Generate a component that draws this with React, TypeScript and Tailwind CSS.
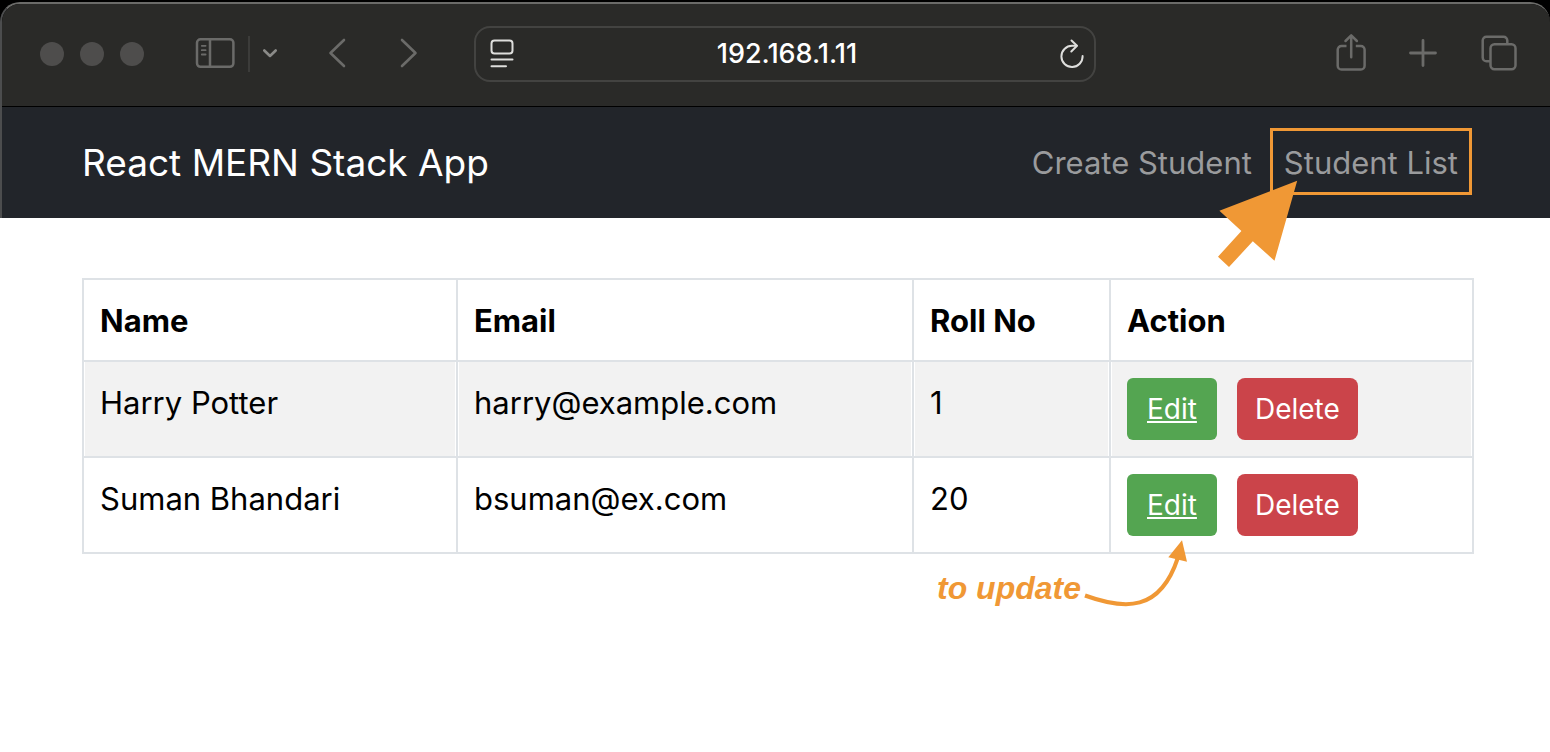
import React from "react";

type Student = { name: string; email: string; rollNo: number };

const students: Student[] = [
  { name: "Harry Potter", email: "harry@example.com", rollNo: 1 },
  { name: "Suman Bhandari", email: "bsuman@ex.com", rollNo: 20 },
];

const line = {
  fill: "none",
  stroke: "currentColor",
  strokeLinecap: "round" as const,
  strokeLinejoin: "round" as const,
};

function SidebarIcon() {
  return (
    <svg width="40" height="32" viewBox="0 0 40 32" {...line} strokeWidth="2.5">
      <rect x="2" y="2.3" width="36.400" height="27.500" rx="3.500" />
      <path d="M15 2.300v27.500" />
      <path d="M6.800 8.800h3.800M6.800 13.200h3.800M6.800 17.500h3.800" strokeWidth="1.800" />
    </svg>
  );
}

function ShareIcon() {
  return (
    <svg width="32" height="40" viewBox="0 0 32 40" {...line} strokeWidth="2.5">
      <path
        strokeLinecap="butt"
        d="M11.500 13H6.500a3.800 3.800 0 0 0-3.800 3.800v16A3.800 3.800 0 0 0 6.500 36.600h19.300a3.800 3.800 0 0 0 3.800-3.800V16.800a3.800 3.800 0 0 0-3.800-3.800h-5"
      />
      <path d="M16.200 24.200V2.500M10.500 8L16.200 2.300 21.900 8" />
    </svg>
  );
}

function TabsIcon() {
  return (
    <svg width="36" height="36" viewBox="0 0 36 36" {...line} strokeWidth="2.5">
      <path
        strokeLinecap="butt"
        d="M26.300 8.500V5.500A3.800 3.800 0 0 0 22.500 1.700H5.500a3.800 3.800 0 0 0-3.800 3.800v17A3.800 3.800 0 0 0 5.500 26.300H9"
      />
      <rect x="9.500" y="9.300" width="25" height="25" rx="4" />
    </svg>
  );
}

function ReaderIcon() {
  return (
    <svg width="24" height="30" viewBox="0 0 24 30" {...line} strokeWidth="2">
      <rect x="1.500" y="1.500" width="21" height="13" rx="3" />
      <path d="M1.500 20.500h21M1.500 27.300h14.500" />
    </svg>
  );
}

function ReloadIcon() {
  return (
    <svg width="24" height="30" viewBox="0 0 24 30" {...line} strokeWidth="2">
      <path d="M16.500 6.800H12a10.600 10.600 0 1 0 10.600 10.300" />
      <path d="M11.500 1.500L17 6.800l-5.700 5.700" />
    </svg>
  );
}

function BrowserToolbar() {
  return (
    <header className="flex h-[105px] items-center border-b border-black bg-[#2a2a28] text-[#6b6b69]">
      <div className="flex w-[472px] shrink-0 items-center pl-[38px]">
        <div className="flex gap-4">
          <span className="size-6 rounded-full bg-[#4e4d4c]" />
          <span className="size-6 rounded-full bg-[#4e4d4c]" />
          <span className="size-6 rounded-full bg-[#4e4d4c]" />
        </div>
        <button type="button" aria-label="Show sidebar" className="ml-[51px] pb-0.5">
          <SidebarIcon />
        </button>
        <span className="ml-[13px] h-9 w-0.5 bg-[#3c3c3a]" />
        <button type="button" aria-label="Tab groups" className="ml-3 pb-0.5 text-[#8a8a88]">
          <svg width="16" height="12" viewBox="0 0 16 12" {...line} strokeWidth="2.600">
            <path d="M2.300 3.500l5.700 5.500 5.700-5.500" />
          </svg>
        </button>
        <button type="button" aria-label="Back" className="ml-[49px] pb-0.5">
          <svg width="20" height="32" viewBox="0 0 20 32" {...line} strokeWidth="2.600">
            <path d="M17 3L3.500 16 17 29" />
          </svg>
        </button>
        <button type="button" aria-label="Forward" className="ml-[52px] pb-0.5">
          <svg width="20" height="32" viewBox="0 0 20 32" {...line} strokeWidth="2.600">
            <path d="M3 3l13.500 13L3 29" />
          </svg>
        </button>
      </div>
      <div className="flex h-14 min-w-0 flex-1 items-center rounded-2xl border-2 border-[#434341] px-[14px] text-[#dededc]">
        <button type="button" aria-label="Reader view">
          <ReaderIcon />
        </button>
        <input
          type="text"
          aria-label="Address"
          defaultValue="192.168.1.11"
          className="min-w-0 flex-1 bg-transparent text-center text-[27px] leading-8 font-medium text-white outline-none"
        />
        <button type="button" aria-label="Reload" className="-mr-1">
          <ReloadIcon />
        </button>
      </div>
      <div className="flex w-[454px] shrink-0 items-center justify-end pr-[33px]">
        <button type="button" aria-label="Share" className="pb-0.5">
          <ShareIcon />
        </button>
        <button type="button" aria-label="New tab" className="ml-[42px] pb-0.5">
          <svg width="28" height="28" viewBox="0 0 28 28" {...line} strokeWidth="2.800">
            <path d="M14 1.500v25M1.500 14h25" />
          </svg>
        </button>
        <button type="button" aria-label="Tab overview" className="ml-11 pb-0.5">
          <TabsIcon />
        </button>
      </div>
    </header>
  );
}

function PointerArrow() {
  return (
    <svg
      className="pointer-events-none absolute top-10 -left-17"
      width="84"
      height="92"
      viewBox="0 0 84 92"
      aria-hidden="true"
    >
      <path
        d="M81.200 1.700L3.400 31.700 25.400 52 2 77.700 13 88 36.800 62.300 58.500 81.700Z"
        fill="#f09835"
      />
    </svg>
  );
}

function NavBar() {
  return (
    <nav className="flex h-[111px] items-center justify-between bg-[#22252a] pr-[76px] pl-20">
      <a href="#home" className="text-[37px] leading-[60px] text-white">
        React MERN Stack App
      </a>
      <div className="flex text-[31px] leading-[48px] text-[#9a9b9d]">
        <a href="#create" className="px-4">
          Create Student
        </a>
        <a href="#students" className="relative mx-4">
          Student List
          <span className="absolute -inset-x-[14px] -top-[11px] -bottom-2 border-3 border-[#f09835]" />
          <PointerArrow />
        </a>
      </div>
    </nav>
  );
}

function UpdateNote() {
  return (
    <div className="pointer-events-none absolute top-16 -left-[190px] flex text-[#f09835]">
      <span className="w-[143px] pt-8 font-['Liberation_Sans',sans-serif] text-[32px] leading-9 font-bold whitespace-nowrap italic">
        to update
      </span>
      <svg width="112" height="72" viewBox="0 0 112 72" aria-hidden="true">
        <path d="M5 57.500C45 72 80 74 97.800 20" fill="none" stroke="currentColor" strokeWidth="4" />
        <path d="M102 2.300L88.300 19.300 107 23.700Z" fill="currentColor" />
      </svg>
    </div>
  );
}

const headCell = "border-2 border-[#dee2e6] px-4 pt-[17px] pb-[15px] text-left font-bold";
const bodyCell =
  "border-2 border-[#dee2e6] px-4 pt-[17px] pb-[15px] text-left align-top group-odd:shadow-[inset_1px_0_0_#fff,inset_-1px_0_0_#fff]";

function StudentTable() {
  return (
    <table className="w-full table-fixed border-collapse text-[31px] leading-[48px] text-black">
      <thead>
        <tr>
          <th scope="col" className={`w-[374px] ${headCell}`}>Name</th>
          <th scope="col" className={`w-[456px] ${headCell}`}>Email</th>
          <th scope="col" className={`w-[197px] ${headCell}`}>Roll No</th>
          <th scope="col" className={headCell}>Action</th>
        </tr>
      </thead>
      <tbody>
        {students.map((student, index) => (
          <tr key={student.email} className="group odd:bg-[#f2f2f2]">
            <td className={bodyCell}>{student.name}</td>
            <td className={bodyCell}>{student.email}</td>
            <td className={bodyCell}>{student.rollNo}</td>
            <td className={bodyCell}>
              <div className="relative -mt-px mb-px flex gap-5 text-[28px] leading-[62px] text-white">
                <a href={`#edit-${student.rollNo}`} className="rounded-md bg-[#54a551] px-5 underline">
                  Edit
                </a>
                <button type="button" className="rounded-lg bg-[#cb444a] px-[18px]">
                  Delete
                </button>
                {index === students.length - 1 && <UpdateNote />}
              </div>
            </td>
          </tr>
        ))}
      </tbody>
    </table>
  );
}

export default function App() {
  return (
    <div className="min-h-screen bg-white font-[Inter,sans-serif]">
      <div className="bg-black pt-0.5">
        <div className="overflow-hidden rounded-t-[20px] border-t-2 border-l-2 border-t-[#6b6b69] border-l-[#4c4d4e]">
          <div className="-mt-0.5">
            <BrowserToolbar />
          </div>
        </div>
      </div>
      <div className="relative border-l-2 border-[#4c4d4e]">
        <NavBar />
      </div>
      <main className="pt-[60px] pr-[76px] pl-[82px]">
        <StudentTable />
      </main>
    </div>
  );
}
